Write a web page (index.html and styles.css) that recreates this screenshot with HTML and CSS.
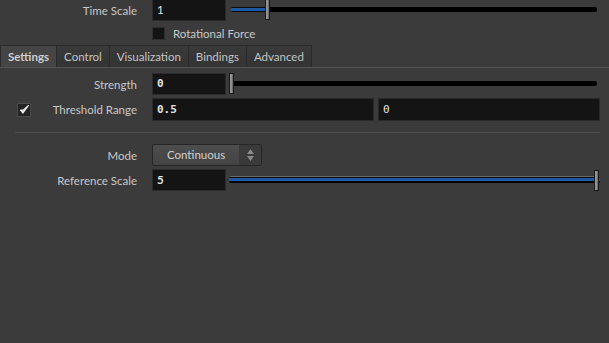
FILE: index.html
```html
<!DOCTYPE html>
<html lang="en">
<head>
  <meta charset="UTF-8">
  <title>Parameters</title>
  <link rel="stylesheet" href="styles.css">
</head>
<body>
  <div class="panel">
    <div class="row row-time">
      <div class="label">Time Scale</div>
      <div class="field short">1</div>
      <div class="slider">
        <div class="track"><div class="fill" style="width: 34px"></div></div>
        <div class="handle" style="left: 34px"></div>
      </div>
    </div>
    <div class="row row-toggle">
      <div class="label"></div>
      <div class="check"></div>
      <span class="toggle-text">Rotational Force</span>
    </div>

    <div class="tabs">
      <div class="tab active">Settings</div>
      <div class="tab">Control</div>
      <div class="tab">Visualization</div>
      <div class="tab">Bindings</div>
      <div class="tab">Advanced</div>
    </div>

    <div class="body">
      <div class="row">
        <div class="label">Strength</div>
        <div class="field short mono bold">0</div>
        <div class="slider">
          <div class="track"></div>
          <div class="handle" style="left: -2px"></div>
        </div>
      </div>
      <div class="row row-tall">
        <div class="label with-check">
          <div class="check checked">
            <svg width="11" height="11" viewBox="0 0 11 11"><path d="M1.5 6 L4 9 L9.5 1.5 L4.2 6.2 Z" fill="#e6e6e6" stroke="#e6e6e6" stroke-width="1.2" stroke-linejoin="round"/></svg>
          </div>
          <span>Threshold Range</span>
        </div>
        <div class="pair">
          <div class="field mono bold">0.5</div>
          <div class="field mono">0</div>
        </div>
      </div>
      <div class="sep"></div>
      <div class="row">
        <div class="label">Mode</div>
        <div class="menu">
          <span class="menu-text">Continuous</span>
          <span class="menu-arrows">
            <svg width="9" height="14" viewBox="0 0 9 14"><path d="M4.5 1 L8 6 L1 6 Z M4.5 13 L8 8 L1 8 Z" fill="#8a8a8a"/></svg>
          </span>
        </div>
      </div>
      <div class="row">
        <div class="label">Reference Scale</div>
        <div class="field short bold">5</div>
        <div class="slider full">
          <div class="track"><div class="fill" style="width: 100%"></div></div>
          <div class="handle end"></div>
        </div>
      </div>
    </div>
  </div>
</body>
</html>
```

FILE: styles.css
```css
body {
  margin: 0;
  background-color: #3b3b3b;
  font-family: Lato, "Noto Sans", sans-serif;
  font-size: 11.5px;
  color: #c8c8c8;
  overflow: hidden;
}

.panel {
  width: 609px;
  height: 343px;
}

.row {
  display: flex;
  align-items: center;
  height: 22px;
  padding-right: 9px;
}

.row-time {
  margin-top: -1px;
}

.row-toggle {
  height: 16px;
  margin-top: 4px;
}

.row-tall {
  height: 23px;
}

.row-tall .field {
  height: 23px;
  line-height: 21px;
}

.label {
  width: 137px;
  flex: none;
  text-align: right;
  margin-right: 15px;
  color: #c8c8c8;
}

.label.with-check {
  display: flex;
  align-items: center;
  justify-content: space-between;
  padding-left: 17px;
  box-sizing: border-box;
}

.field {
  background-color: #141414;
  border: 1px solid #2b2b2b;
  height: 22px;
  box-sizing: border-box;
  padding: 0 4px;
  line-height: 20px;
  color: #e4e4e4;
}

.field.short {
  width: 74px;
  flex: none;
}

.mono {
  font-family: "DejaVu Sans Mono", monospace;
  font-size: 11px;
}

.bold {
  font-weight: bold;
}

.pair {
  flex: 1;
  display: flex;
  gap: 4px;
}

.pair .field {
  flex: 1;
}

.check {
  width: 13px;
  height: 13px;
  background-color: #141414;
  border: 1px solid #2e2e2e;
  box-sizing: border-box;
  flex: none;
}

.check.checked {
  width: 14px;
  height: 14px;
  display: flex;
  align-items: center;
  justify-content: center;
  background-color: #232323;
  border-color: #4c4c4c;
}

.toggle-text {
  margin-left: 8px;
}

.slider {
  position: relative;
  flex: 1;
  height: 22px;
  margin-left: 5px;
  margin-right: 3px;
}

.slider.full {
  margin-left: 3px;
  margin-right: 0;
}

.track {
  position: absolute;
  left: 0;
  right: 0;
  top: 8px;
  height: 5px;
  background-color: #000;
  border-radius: 2px;
  overflow: hidden;
}

.fill {
  height: 5px;
  background-color: #1d5aa6;
  border-top: 1px solid #0a0a0a;
  border-bottom: 1px solid #0a0a0a;
  box-sizing: border-box;
}

.slider.full .track {
  border-top: 1px solid #6a6a6a;
  height: 6px;
  top: 7px;
}

.handle {
  position: absolute;
  top: 0;
  width: 5px;
  height: 21px;
  background: linear-gradient(to right, #9a9a9a, #8a8a8a 60%, #5a5a5a);
  border: 1px solid #1a1a1a;
  box-sizing: border-box;
}

.handle.end {
  right: 1px;
  top: 1px;
}

.tabs {
  display: flex;
  margin-top: 4px;
  height: 22px;
  border-bottom: 1px solid #555;
}

.tab {
  padding: 0 7px;
  line-height: 22px;
  background: linear-gradient(#3a3a3a, #333);
  border: 1px solid #2a2a2a;
  border-bottom: none;
  margin-right: -1px;
  color: #c4c4c4;
}

.tab.active {
  background: #454545;
  font-weight: bold;
  color: #cfcfcf;
}

.body {
  padding-top: 5px;
}

.body .row + .row {
  margin-top: 3px;
}

.sep {
  height: 1px;
  background-color: #4e4e4e;
  margin: 11px 9px 11px 15px;
}

.menu {
  display: flex;
  width: 110px;
  height: 22px;
  box-sizing: border-box;
  border: 1px solid #262626;
  border-radius: 2px;
  background: linear-gradient(#4d4d4d, #434343);
  overflow: hidden;
}

.menu-text {
  flex: 1;
  text-align: center;
  line-height: 20px;
  color: #d0d0d0;
}

.menu-arrows {
  width: 22px;
  display: flex;
  align-items: center;
  justify-content: center;
  background-color: #3a3a3a;
}
```
